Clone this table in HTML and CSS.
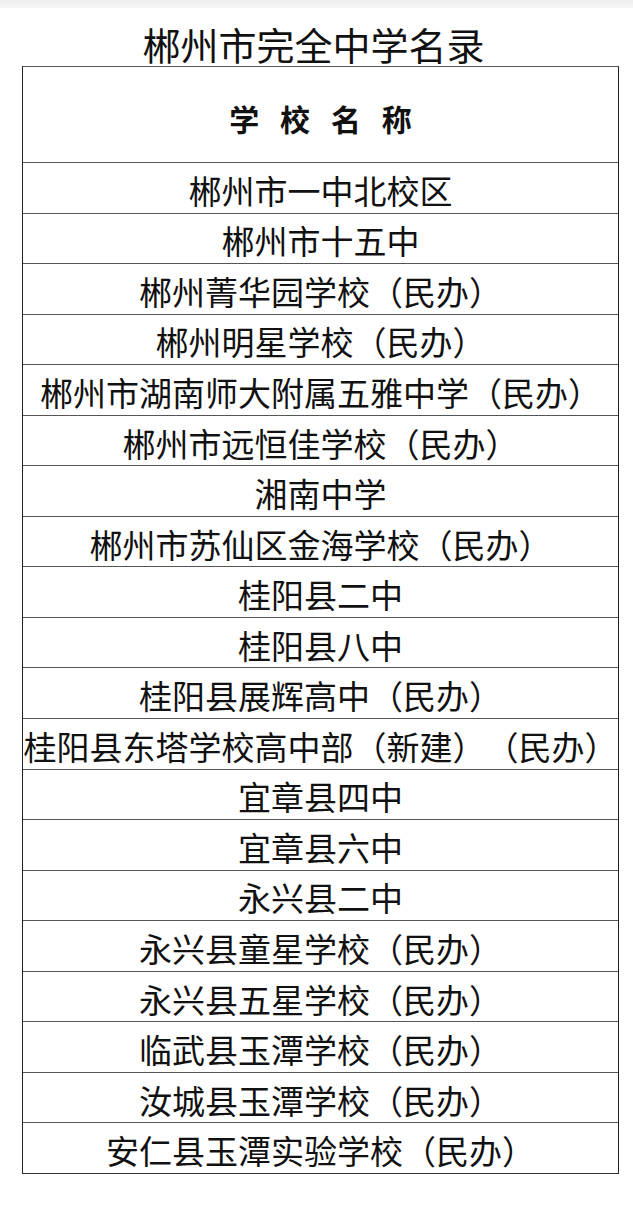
FILE: index.html
```html
<!DOCTYPE html>
<html lang="zh-CN">
<head>
<meta charset="utf-8">
<title>郴州市完全中学名录</title>
<link rel="stylesheet" href="styles.css">
</head>
<body>
<div class="topband"></div>
<div class="page">
  <h1 class="title">郴州市完全中学名录</h1>
  <div class="table">
    <div class="head">学 校 名 称</div>
    <div class="row">郴州市一中北校区</div>
    <div class="row">郴州市十五中</div>
    <div class="row">郴州菁华园学校（民办）</div>
    <div class="row">郴州明星学校（民办）</div>
    <div class="row">郴州市湖南师大附属五雅中学（民办）</div>
    <div class="row">郴州市远恒佳学校（民办）</div>
    <div class="row">湘南中学</div>
    <div class="row">郴州市苏仙区金海学校（民办）</div>
    <div class="row">桂阳县二中</div>
    <div class="row">桂阳县八中</div>
    <div class="row">桂阳县展辉高中（民办）</div>
    <div class="row">桂阳县东塔学校高中部（新建）（民办）</div>
    <div class="row">宜章县四中</div>
    <div class="row">宜章县六中</div>
    <div class="row">永兴县二中</div>
    <div class="row">永兴县童星学校（民办）</div>
    <div class="row">永兴县五星学校（民办）</div>
    <div class="row">临武县玉潭学校（民办）</div>
    <div class="row">汝城县玉潭学校（民办）</div>
    <div class="row">安仁县玉潭实验学校（民办）</div>
  </div>
</div>
</body>
</html>
```
FILE: styles.css
```css
html, body {
  margin: 0;
  padding: 0;
  background: #ffffff;
}
body {
  font-family: "Noto Sans CJK SC", "Noto Sans", sans-serif;
  color: #111111;
  text-spacing-trim: space-all;
}
.topband {
  height: 8px;
  background: linear-gradient(to bottom, #eeeeee, #f6f6f6);
}
.page {
  padding: 0 14px 0 22px;
}
.title {
  margin: 0;
  padding-top: 14px;
  font-size: 38px;
  line-height: 44px;
  font-weight: normal;
  text-align: center;
  color: #111111;
  padding-right: 14px;
}
.table {
  width: 595px;
  border: 1px solid #222222;
  border-top-color: #555555;
  border-bottom-color: #333333;
}
.head {
  height: 96px;
  box-sizing: border-box;
  padding-top: 7px;
  display: flex;
  align-items: center;
  justify-content: center;
  font-size: 30px;
  font-weight: bold;
  word-spacing: 14px;
  border-bottom: 1px solid #555555;
}
.row {
  height: 50.55px;
  box-sizing: border-box;
  padding-top: 4px;
  display: flex;
  align-items: center;
  justify-content: center;
  font-size: 33px;
  white-space: nowrap;
  border-bottom: 1px solid #555555;
}
.row:last-child {
  border-bottom: none;
  height: 49.55px;
}
```
